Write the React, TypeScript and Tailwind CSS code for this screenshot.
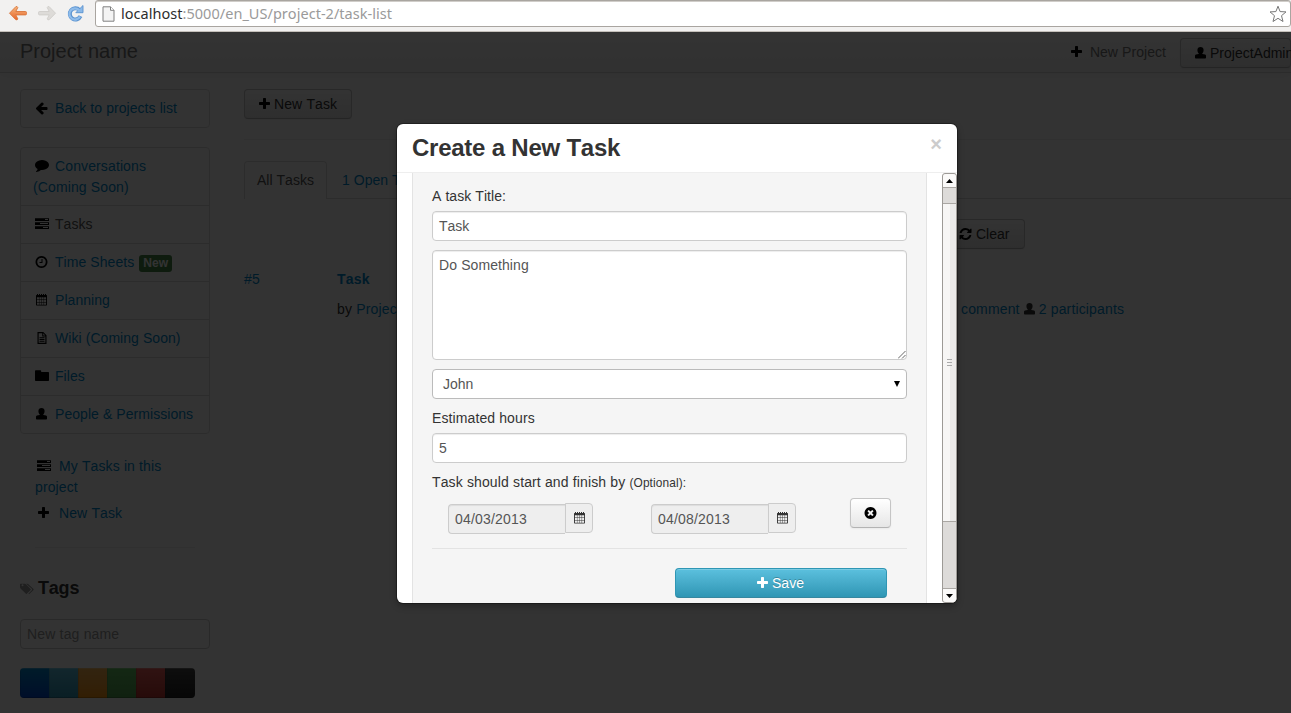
import React from "react";

const GLYPHS = {
  plus: "M1600 736v192q0 40-28 68t-68 28h-416v416q0 40-28 68t-68 28h-192q-40 0-68-28t-28-68v-416h-416q-40 0-68-28t-28-68v-192q0-40 28-68t68-28h416v-416q0-40 28-68t68-28h192q40 0 68 28t28 68v416h416q40 0 68 28t28 68z",
  comment:
    "M1792 896q0 174-120 321.5t-326 233-450 85.5q-70 0-145-8-198 175-460 242-49 14-114 22-17 2-30.5-9t-17.5-29v-1q-3-4-.5-12t2-10 4.5-9.5l6-9 7-8.5 8-9q7-8 31-34.5t34.5-38 31-39.5 32.5-51 27-59 26-76q-157-89-247.5-220t-90.5-281q0-130 71-248.5t191-204.5 286-136.5 348-50.5q244 0 450 85.5t326 233 120 321.5z",
  clock:
    "M1024 544v448q0 14-9 23t-23 9h-320q-14 0-23-9t-9-23v-64q0-14 9-23t23-9h224v-352q0-14 9-23t23-9h64q14 0 23 9t9 23zm416 352q0-148-73-273t-198-198-273-73-273 73-198 198-73 273 73 273 198 198 273 73 273-73 198-198 73-273zm224 0q0 209-103 385.5t-279.5 279.5-385.5 103-385.5-103-279.5-279.5-103-385.5 103-385.5 279.5-279.5 385.5-103 385.5 103 279.5 279.5 103 385.5z",
  user: "M896 128C1140 128 1290 290 1290 520C1290 700 1230 850 1130 930V1010L1480 1080Q1600 1120 1600 1250V1500Q1600 1600 1500 1600H292Q192 1600 192 1500V1250Q192 1120 312 1080L662 1010V930C562 850 502 700 502 520C502 290 652 128 896 128z",
  folder:
    "M1792 480v960q0 96-96 96h-1600q-96 0-96-96v-1184q0-96 96-96h600q96 0 96 96v128h904q96 0 96 96z",
  back: "M1664 896v128q0 53-32.5 90.5t-84.5 37.5h-704l293 294q38 36 38 90t-38 90l-75 76q-37 37-90 37-52 0-91-37l-651-652q-37-37-37-90 0-52 37-91l651-650q38-38 91-38 52 0 90 38l75 74q38 38 38 91t-38 91l-293 293h704q52 0 84.5 37.5t32.5 90.5z",
  tasks:
    "M1024 1408h640v-128h-640v128zM640 896h1024v-128h-1024v128zM1280 384h384v-128h-384v128zM0 1170h1792v366h-1792zM0 658h1792v366h-1792zM0 146h1792v366h-1792z",
  cancel:
    "M1277 1122q0-26-19-45l-181-181 181-181q19-19 19-45 0-27-19-46l-90-90q-19-19-46-19-26 0-45 19l-181 181-181-181q-19-19-45-19-27 0-46 19l-90 90q-19 19-19 46 0 26 19 45l181 181-181 181q-19 19-19 45 0 27 19 46l90 90q19 19 46 19 26 0 45-19l181-181 181 181q19 19 45 19 27 0 46-19l90-90q19-19 19-46zm387-226q0 209-103 385.5t-279.5 279.5-385.5 103-385.5-103-279.5-279.5-103-385.5 103-385.5 279.5-279.5 385.5-103 385.5 103 279.5 279.5 103 385.5z",
  refresh:
    "M1639 1056q0 5-1 7-64 268-268 434.5t-478 166.5q-146 0-282.5-55t-243.5-157l-129 129q-19 19-45 19t-45-19-19-45v-448q0-26 19-45t45-19h448q26 0 45 19t19 45-19 45l-137 137q71 66 161 102t187 36q134 0 250-65t186-179q11-17 53-117 8-23 30-23h192q13 0 22.5 9.5t9.5 22.5zm25-800v448q0 26-19 45t-45 19h-448q-26 0-45-19t-19-45 19-45l138-138q-148-137-349-137-134 0-250 65t-186 179q-11 17-53 117-8 23-30 23h-199q-13 0-22.5-9.5t-9.5-22.5v-7q65-268 270-434.5t480-166.5q146 0 284 55.5t245 156.5l130-129q19-19 45-19t45 19 19 45z",
  calendar:
    "M192 1536V320l64-64h64V128h128v128h128V128h128v128h128V128h128v128h128V128h128v128h128V128h128v128h64l64 64v1216l-64 64H256zM310 530v260h260V530zM620 530v260h250V530zM925 530v260h245V530zM1225 530v260h260V530zM310 860v280h260V860zM620 860v280h250V860zM925 860v280h245V860zM1225 860v280h260V860zM310 1210v280h260v-280zM620 1210v280h250v-280zM925 1210v280h245v-280zM1225 1210v280h260v-280z",
  file: "M384 128h740l412 412v1124H384zM530 274v1244h860V690H990V274zM1120 300v260h260zM640 800h640v128H640zM640 1030h640v128H640zM640 1260h640v128H640z",
  tags: "M0 300q0-90 90-90h500q70 0 130 60l640 640q50 50 0 100l-500 500q-50 50-100 0L100 850Q0 750 0 650zM200 420a125 125 0 1 0 250 0a125 125 0 1 0-250 0zM780 210h130q70 0 130 60l690 640q50 50 0 100l-500 500q-80 80-160-10l440-450q90-90 0-180z",
};

const WIDE: (keyof typeof GLYPHS)[] = ["comment", "tasks", "folder", "tags"];

function Icon({ name, className = "" }: { name: keyof typeof GLYPHS; className?: string }) {
  return (
    <svg
      viewBox={WIDE.includes(name) ? "0 0 1792 1792" : "64 0 1792 1792"}
      fill="currentColor"
      fillRule="evenodd"
      className={"inline-block h-[14px] w-[14px] shrink-0 " + className}
    >
      <path d={GLYPHS[name]} />
    </svg>
  );
}

const grayButton =
  "flex h-[30px] shrink-0 items-center rounded-[4px] border border-[#c5c5c5] border-b-[#b3b3b3] bg-linear-to-b from-white to-[#e6e6e6] text-[#333] shadow-[inset_0_1px_0_rgba(255,255,255,.2),0_1px_2px_rgba(0,0,0,.05)]";

function BrowserBar() {
  return (
    <header className="flex h-8 shrink-0 items-start border-b border-[#c4c0ba] bg-[#f2f1f0] pl-2">
      <svg className="mt-[4px] h-[18px] w-5" viewBox="0 0 20 18">
        <defs>
          <linearGradient id="fire" x1="0" y1="0" x2="0" y2="1">
            <stop offset="0" stopColor="#f5b67c" />
            <stop offset="1" stopColor="#e8662c" />
          </linearGradient>
        </defs>
        <path d="M1.500 9.200 7.800 2.700q1.500-.7 2 .8L7.800 7.500H17.500q1 0 1 1.200v1q0 1.200-1 1.200H7.800l2 4q-.5 1.500-2 .8z" fill="url(#fire)" stroke="#d9763c" strokeWidth=".9" strokeLinejoin="round" />
      </svg>
      <svg className="mt-[4px] ml-[9px] h-[18px] w-5" viewBox="0 0 20 18">
        <path d="M18.500 9.200 12.200 2.700q-1.500-.7-2 .8l2 4H2.500q-1 0-1 1.200v1q0 1.200 1 1.200h9.700l-2 4q.5 1.500 2 .8z" fill="#dddbd8" stroke="#cfcdca" strokeWidth=".9" strokeLinejoin="round" />
      </svg>
      <svg className="mt-[4px] ml-[9px] h-[19px] w-[19px]" viewBox="0 0 19 19">
        <path d="M14.500 12.200a5.600 5.600 0 1 1-1-6.200" fill="none" stroke="#5b93d0" strokeWidth="4" />
        <path d="M17 1.500v7.200H9.800l2.500-2.500z" fill="#8ab8e8" stroke="#5b93d0" strokeWidth=".9" />
        <path d="M14 12.500a5.600 5.600 0 1 1-.8-6.200" fill="none" stroke="#8fbcea" strokeWidth="2.200" />
      </svg>
      <div className="ml-[10px] flex h-[27px] flex-1 items-center rounded-[3px] border border-[#a9a5a0] bg-white pr-[3px] pl-[6px] shadow-[inset_0_1px_0_#d0cdc9]">
        <svg className="h-4 w-[13px]" viewBox="0 0 13 16">
          <path d="M1 .8h7.500l3.500 3.500v10.900H1z" fill="#f4f4f4" stroke="#808080" />
          <path d="M8.500.8v3.500H12" fill="#fff" stroke="#808080" />
        </svg>
        <span className="ml-[6px] flex-1 pb-[2px] font-['Noto_Sans',sans-serif] text-[14.500px] leading-5 tracking-[0.03px] whitespace-nowrap text-[#9a9a9a]">
          <span className="text-[#2d2d2d]">localhost</span>:5000/en_US/project-2/task-list
        </span>
        <svg className="h-[18px] w-[18px]" viewBox="0 0 18 18">
          <path d="M9 1.200 11.100 6.600 17 6.900 12.500 10.700 14 16.500 9 13.300 4 16.500 5.500 10.700 1 6.900 6.900 6.600z" fill="#fff" stroke="#777" strokeLinejoin="round" />
        </svg>
      </div>
    </header>
  );
}

const menu: { icon: keyof typeof GLYPHS; label: string; badge?: boolean; active?: boolean }[] = [
  { icon: "tasks", label: "Tasks", active: true },
  { icon: "clock", label: "Time Sheets", badge: true },
  { icon: "calendar", label: "Planning" },
  { icon: "file", label: "Wiki (Coming Soon)" },
  { icon: "folder", label: "Files" },
  { icon: "user", label: "People & Permissions" },
];

const swatches = [
  "from-[#0088cc] to-[#0044cc]",
  "from-[#5bc0de] to-[#2f96b4]",
  "from-[#fbb450] to-[#f89406]",
  "from-[#62c462] to-[#51a351]",
  "from-[#ee5f5b] to-[#bd362f]",
  "from-[#444444] to-[#222222]",
];

function Sidebar() {
  return (
    <aside className="w-[190px] shrink-0">
      <div className="flex h-[39px] items-center rounded-[4px] border border-[#ddd] pb-[2px] pl-[14px] tracking-[0.05px] text-[#0088cc]">
        <Icon name="back" className="text-black" />
        <span className="ml-[6px]">Back to projects list</span>
      </div>
      <nav className="mt-[19px] rounded-[4px] border border-[#ddd] tracking-[0.05px] text-[#0088cc]">
        <div className="h-[57px] pt-2 pl-3 leading-[21px] tracking-[0.12px]">
          <Icon name="comment" className="mr-[6px] ml-[2px] -translate-y-px align-[-2px] text-black" />
          Conversations
          <br />
          (Coming Soon)
        </div>
        {menu.map((m) => (
          <div key={m.label} className="flex h-[38px] items-center border-t border-[#ddd] pb-[2px] pl-[14px]">
            <Icon name={m.icon} className="text-black" />
            <span className={m.active ? "ml-[6px] text-[#555]" : "ml-[6px]"}>{m.label}</span>
            {m.badge && (
              <span className="mt-[3px] ml-[5px] h-[17px] rounded-[3px] bg-[#468847] px-1 text-[12px] leading-[16px] font-bold text-white">New</span>
            )}
          </div>
        ))}
      </nav>
      <div className="mt-[22px] pl-[15px] leading-[21px] tracking-[0.1px] text-[#0088cc]">
        <div>
          <Icon name="tasks" className="mr-[8px] ml-[2px] align-[-2px] text-black" />
          My Tasks in this
          <br />
          project
        </div>
        <div className="mt-[5px]">
          <Icon name="plus" className="mr-[8px] ml-[2px] align-[-2px] text-black" />
          New Task
        </div>
      </div>
      <hr className="mt-[23px] mr-[-5px] ml-[15px] w-[160px] border-[#eee]" />
      <h4 className="mt-[30px] flex h-5 items-center text-[18px] font-bold text-[#333]">
        <Icon name="tags" className="mt-px mr-1 text-[#999]" />
        <span className="tracking-[-0.2px]">Tags</span>
      </h4>
      <div className="mt-[21px] flex h-[30px] items-center rounded-[4px] border border-[#ccc] bg-white pl-[6px] tracking-[0.15px] text-[#999]">New tag name</div>
      <div className="mt-[19px] flex h-[30px] w-[175px] overflow-hidden rounded-[4px]">
        {swatches.map((s) => (
          <div key={s} className={"w-[29px] bg-linear-to-b shadow-[inset_0_1px_0_rgba(255,255,255,.2),inset_1px_0_0_rgba(0,0,0,.1),inset_0_-1px_0_rgba(0,0,0,.2)] last:w-[30px] " + s} />
        ))}
      </div>
    </aside>
  );
}

function ProjectPage() {
  return (
    <div className="flex h-full w-full flex-col">
      <div className="flex h-[41px] shrink-0 items-start overflow-hidden border-b border-[#d4d4d4] bg-linear-to-b from-white to-[#f2f2f2] pl-5 text-[#777] shadow-[0_1px_10px_rgba(0,0,0,.065)]">
        <span className="mt-[9px] text-[20px] leading-5">Project name</span>
        <div className="mt-[10px] ml-auto flex items-center leading-5">
          <Icon name="plus" className="mr-[6px] text-black" />
          <span className="tracking-[0.05px]">New Project</span>
        </div>
        <div className={grayButton + " mt-[6px] ml-[14px] w-[111px] pl-[13px]"}>
          <Icon name="user" className="mr-[2px] text-black" />
          ProjectAdmin
        </div>
      </div>
      <div className="flex flex-1 gap-[34px] pt-4 pl-5">
        <Sidebar />
        <main className="min-w-0 flex-1">
          <div className={grayButton + " w-[108px] pl-[13px] tracking-[0.1px]"}>
            <Icon name="plus" className="mr-[2px] text-black" />
            New Task
          </div>
          <hr className="mt-5 border-[#eee]" />
          <div className="mt-[21px] flex h-[38px]">
            <div className="w-[83px] rounded-t-[4px] border border-b-0 border-[#ddd] pt-2 pl-3 leading-5 text-[#555]">All Tasks</div>
            <div className="flex-1 border-b border-[#ddd] pt-[9px] pl-[15px] leading-5 text-[#0088cc]">1 Open Tasks</div>
          </div>
          <div className="mt-5 flex pl-[701px]">
            <div className={grayButton + " w-20 pl-[13px]"}>
              <Icon name="refresh" className="mr-[3px] text-black" />
              Clear
            </div>
          </div>
          <div className="mt-5 flex leading-5 text-[#0088cc]">
            <span className="w-[93px] tracking-[0.1px]">#5</span>
            <div>
              <b className="tracking-[0.2px]">Task</b>
              <div className="mt-[10px] flex items-center tracking-[0.15px]">
                <span className="w-[624px]">
                  <span className="text-[#333]">by </span>ProjectAdmin
                </span>
                <span>comment</span>
                <Icon name="user" className="mr-[2px] ml-[3px] text-[#333]" />
                <span>2 participants</span>
              </div>
            </div>
          </div>
        </main>
      </div>
    </div>
  );
}

const field = "w-full rounded-[4px] border border-[#ccc] bg-white px-[6px] text-[#555] shadow-[inset_0_1px_1px_rgba(0,0,0,.075)]";

function DateField({ value }: { value: string }) {
  return (
    <div className="mt-[5px] flex items-start">
      <div className="mt-px flex h-[30px] w-[117px] items-center rounded-l-[4px] border border-r-0 border-[#ccc] bg-[#eee] pl-[6px] tracking-[0.18px] text-[#555] shadow-[inset_0_1px_1px_rgba(0,0,0,.075)]">{value}</div>
      <div className="flex h-[30px] w-7 items-center rounded-r-[4px] border border-[#ccc] bg-[#eee] pl-[7px] text-[#333]">
        <Icon name="calendar" />
      </div>
    </div>
  );
}

function Scrollbar() {
  return (
    <div className="flex w-[15px] shrink-0 flex-col rounded-[3px] border border-[#9d9a96] bg-[#dddbd9]">
      <div className="flex h-[14px] items-center justify-center rounded-t-[3px] border-b border-[#aaa7a3] bg-[#fbfaf9]">
        <svg className="h-1 w-[7px]" viewBox="0 0 7 4">
          <path d="M3.500 0 7 4H0z" />
        </svg>
      </div>
      <div className="h-[15px]" />
      <div className="flex h-[319px] items-center justify-center border-y border-[#aaa7a3] bg-linear-to-r from-[#f7f6f5] from-50% to-[#ebeae9] to-50%">
        <div className="flex flex-col gap-[2px]">
          <i className="h-px w-[5px] bg-[#aaa]" />
          <i className="h-px w-[5px] bg-[#aaa]" />
          <i className="h-px w-[5px] bg-[#aaa]" />
        </div>
      </div>
      <div className="flex-1" />
      <div className="flex h-[14px] items-center justify-center rounded-b-[3px] border-t border-[#aaa7a3] bg-[#fbfaf9]">
        <svg className="h-1 w-[7px]" viewBox="0 0 7 4">
          <path d="M3.500 4 7 0H0z" />
        </svg>
      </div>
    </div>
  );
}

function TaskDialog() {
  return (
    <section className="absolute top-[92px] left-[397px] flex h-[479px] w-[560px] flex-col overflow-hidden rounded-[6px] bg-white shadow-[0_0_0_1px_rgba(0,0,0,.3),0_3px_7px_rgba(0,0,0,.3)]">
      <div className="flex h-[49px] shrink-0 justify-between border-b border-[#eee] pr-[15px] pl-[15px]">
        <h3 className="pt-[9px] text-[24px] leading-[30px] font-bold tracking-[-0.25px]">Create a New Task</h3>
        <span className="pt-[10px] text-[20px] leading-5 font-bold text-[#ccc]">×</span>
      </div>
      <div className="flex min-h-0 flex-1 pl-[15px]">
        <div className="mr-[15px] w-[515px] overflow-hidden border-x border-[#e3e3e3] bg-[#f5f5f5] pt-[13px] pr-[19px] pl-[19px] leading-5">
          <div className="tracking-[0.05px]">A task Title:</div>
          <div className={field + " mt-[5px] h-[30px] pt-1"}>Task</div>
          <div className={field + " mt-[9px] flex h-[110px] justify-between pt-1 tracking-[0.08px]"}>
            Do Something
            <svg className="mr-[-6px] h-2 w-2 self-end" viewBox="0 0 8 8">
              <path d="M0 7.500 7.500 0M4 7.500 7.500 4" stroke="#666" fill="none" />
            </svg>
          </div>
          <div className="mt-[9px] flex h-[30px] items-center justify-between rounded-[4px] border border-[#bbb] bg-white pr-[6px] pl-[10px] text-[#555]">
            John
            <svg className="h-[6px] w-[6px]" viewBox="0 0 6 6">
              <path d="M0 0h6L3 6z" fill="#000" />
            </svg>
          </div>
          <div className="mt-[9px] tracking-[0.1px]">Estimated hours</div>
          <div className={field + " mt-[5px] h-[30px] pt-1"}>5</div>
          <div className="mt-[9px] tracking-[0.12px]">
            Task should start and finish by <span className="text-[11.900px]">(Optional):</span>
          </div>
          <div className="mt-[5px] flex h-[36px] pl-4">
            <DateField value="04/03/2013" />
            <div className="w-[58px]" />
            <DateField value="04/08/2013" />
            <div className={grayButton + " ml-[54px] w-[41px] justify-center"}>
              <Icon name="cancel" className="text-black" />
            </div>
          </div>
          <hr className="mt-[14px] border-[#e3e3e3]" />
          <div className="mt-[19px] mr-5 ml-auto flex h-[30px] w-[212px] items-center justify-center rounded-[4px] border border-[#2f96b4] border-b-[#1f6377]/60 bg-linear-to-b from-[#5bc0de] to-[#2f96b4] pr-[2px] text-white shadow-[inset_0_1px_0_rgba(255,255,255,.2)] text-shadow-[0_-1px_0_rgba(0,0,0,.25)]">
            <Icon name="plus" className="mr-[2px]" />
            Save
          </div>
        </div>
        <Scrollbar />
      </div>
    </section>
  );
}

export default function App() {
  return (
    <div className="flex h-[713px] w-[1291px] flex-col overflow-hidden bg-white font-['Liberation_Sans',Arial,sans-serif] text-[14px] leading-5 text-[#333] [font-kerning:none] [word-spacing:0.1px]">
      <BrowserBar />
      <div className="relative min-h-0 flex-1 overflow-hidden">
        <ProjectPage />
        <div className="absolute inset-0 bg-black/80" />
        <TaskDialog />
      </div>
    </div>
  );
}
